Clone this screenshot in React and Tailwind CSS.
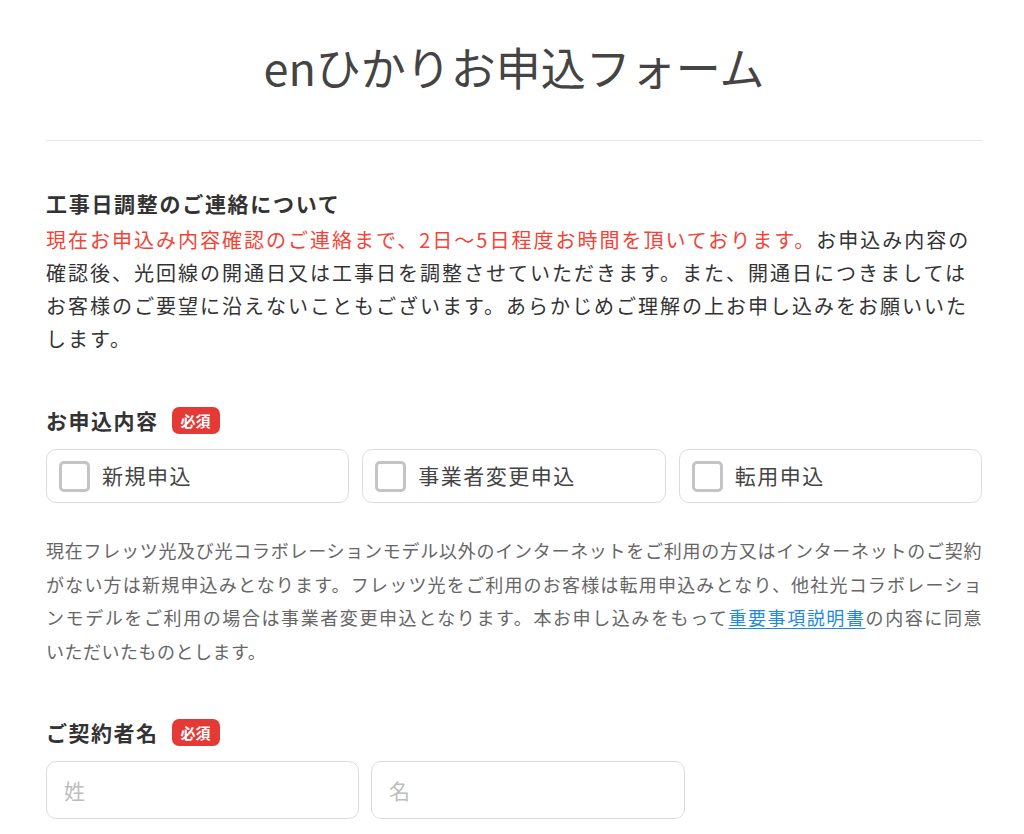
import React from "react";

const font = { fontFamily: '"Noto Sans CJK JP", "Noto Sans", sans-serif' };

function Badge() {
  return (
    <span className="ml-[13px] inline-flex h-[27px] w-[48px] items-center justify-center rounded-[7px] bg-[#e53935] text-[15px] font-bold leading-none text-white">
      必須
    </span>
  );
}

function CheckCard({ label }) {
  return (
    <label className="flex h-[54px] items-center rounded-[10px] border border-[#dcdcdc] bg-white pl-[12px]">
      <span className="h-[31px] w-[31px] shrink-0 rounded-[5px] border-[3px] border-[#c4c4c4] bg-white" />
      <span className="ml-[12px] text-[21px] tracking-[1.5px] text-[#444]">{label}</span>
    </label>
  );
}

function Line({ children, last }) {
  return (
    <span className={last ? "block" : "block text-justify [text-align-last:justify]"}>
      {children}
    </span>
  );
}

export default function App() {
  return (
    <div className="min-h-[834px] bg-white" style={font}>
      <div className="ml-[46px] w-[936px]">
        <h1 className="pt-[36px] text-center text-[45px] leading-[62px] text-[#444]">
          enひかりお申込フォーム
        </h1>
        <div className="mt-[42px] h-px bg-[#e6e6e6]" />

        <section className="pt-[46px]">
          <h2 className="text-[21px] font-bold leading-[32px] tracking-[1.7px] text-[#333]">
            工事日調整のご連絡について
          </h2>
          <p className="mt-[4px] text-[20px] leading-[33px] tracking-[2px] text-[#333]">
            <span className="text-[#f44336]">
              現在お申込み内容確認のご連絡まで、2日〜5日程度お時間を頂いております。
            </span>
            お申込み内容の確認後、光回線の開通日又は工事日を調整させていただきます。また、開通日につきましてはお客様のご要望に沿えないこともございます。あらかじめご理解の上お申し込みをお願いいたします。
          </p>
        </section>

        <section className="pt-[49px]">
          <div className="flex items-center">
            <span className="text-[21px] font-bold leading-[32px] tracking-[1.5px] text-[#333]">
              お申込内容
            </span>
            <Badge />
          </div>
          <div className="mt-[13px] grid grid-cols-3 gap-[13px]">
            <CheckCard label="新規申込" />
            <CheckCard label="事業者変更申込" />
            <CheckCard label="転用申込" />
          </div>
          <p className="mt-[31px] text-[18px] leading-[33.5px] tracking-[0.5px] text-[#666]">
            <Line>
              現在フレッツ光及び光コラボレーションモデル以外のインターネットをご利用の方又はインターネットのご契約
            </Line>
            <Line>
              がない方は新規申込みとなります。フレッツ光をご利用のお客様は転用申込みとなり、他社光コラボレーショ
            </Line>
            <Line>
              ンモデルをご利用の場合は事業者変更申込となります。本お申し込みをもって
              <a href="#" className="text-[#1e88e5] underline underline-offset-[3px]">
                重要事項説明書
              </a>
              の内容に同意
            </Line>
            <Line last>いただいたものとします。</Line>
          </p>
        </section>

        <section className="pt-[48px]">
          <div className="flex items-center">
            <span className="text-[21px] font-bold leading-[32px] tracking-[1.5px] text-[#333]">
              ご契約者名
            </span>
            <Badge />
          </div>
          <div className="mt-[13px] flex gap-[12px]">
            <input
              placeholder="姓"
              className="h-[58px] w-[313px] rounded-[10px] border border-[#dcdcdc] px-[17px] text-[21px] text-[#444] placeholder:text-[#bdbdbd] outline-none"
            />
            <input
              placeholder="名"
              className="h-[58px] w-[314px] rounded-[10px] border border-[#dcdcdc] px-[17px] text-[21px] text-[#444] placeholder:text-[#bdbdbd] outline-none"
            />
          </div>
        </section>
      </div>
    </div>
  );
}
